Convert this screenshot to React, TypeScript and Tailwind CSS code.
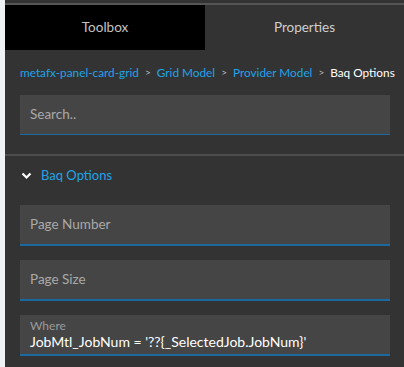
import React from "react";

const font = { fontFamily: "Lato, 'Noto Sans', sans-serif" };

function Field({ label }: { label: string }) {
  return (
    <div className="h-[41px] bg-[#454545] border-b-2 border-[#1a6aa0] flex items-center px-[10px] text-[13.5px] text-[#a9a9a9]">
      {label}
    </div>
  );
}

function Sep() {
  return <span className="text-[#bbbbbb] text-[10px] mx-[6px]">&gt;</span>;
}

export default function App() {
  return (
    <div className="w-[404px] h-[367px] flex bg-[#333333] overflow-hidden" style={font}>
      <div className="w-[5px] bg-[#eef2f5] shrink-0" />
      <div className="flex-1 flex flex-col">
        <div className="h-[3px] bg-[#333333]" />
        <div className="h-[2px] bg-[#555555]" />
        <div className="flex h-[45px]">
          <div className="w-[200px] bg-black flex items-center justify-center text-[13.5px] text-[#c4c4c4]">Toolbox</div>
          <div className="flex-1 flex items-center justify-center text-[13.5px] text-[#cfcfcf]">Properties</div>
        </div>
        <div className="h-[44px] flex items-center pl-[15px] pt-[1px] text-[11.8px] text-[#1fa3e8] whitespace-nowrap">
          <span>metafx-panel-card-grid</span>
          <Sep />
          <span>Grid Model</span>
          <Sep />
          <span>Provider Model</span>
          <Sep />
          <span className="text-white">Baq Options</span>
        </div>
        <div className="px-[15px] pr-[14px] pt-[1px]">
          <div className="h-[40px] bg-[#454545] border-b-[1.5px] border-[#1a6aa0] flex items-center px-[10px] text-[13.5px] text-[#a9a9a9]">
            Search..
          </div>
        </div>
        <div className="h-[19px]" />
        <div className="h-[2px] bg-[#4d4d4d]" />
        <div className="h-[39px] flex items-center pl-[16px] text-[13px] text-[#1fa3e8]">
          <svg width="11" height="8" viewBox="0 0 11 8" className="mr-[9px]">
            <path d="M1.5 1.5 L5.5 5.5 L9.5 1.5" stroke="white" strokeWidth="2.2" fill="none" />
          </svg>
          Baq Options
        </div>
        <div className="px-[15px] pr-[14px] flex flex-col gap-[14px] pt-[10px]">
          <Field label="Page Number" />
          <Field label="Page Size" />
          <div className="h-[41px] bg-[#454545] border-b-2 border-[#1a6aa0] flex flex-col justify-center px-[10px]">
            <div className="text-[12px] text-[#9a9a9a] leading-[14px]">Where</div>
            <div className="text-[14px] text-white leading-[18px]">{"JobMtl_JobNum = '??{_SelectedJob.JobNum}'"}</div>
          </div>
        </div>
      </div>
    </div>
  );
}
